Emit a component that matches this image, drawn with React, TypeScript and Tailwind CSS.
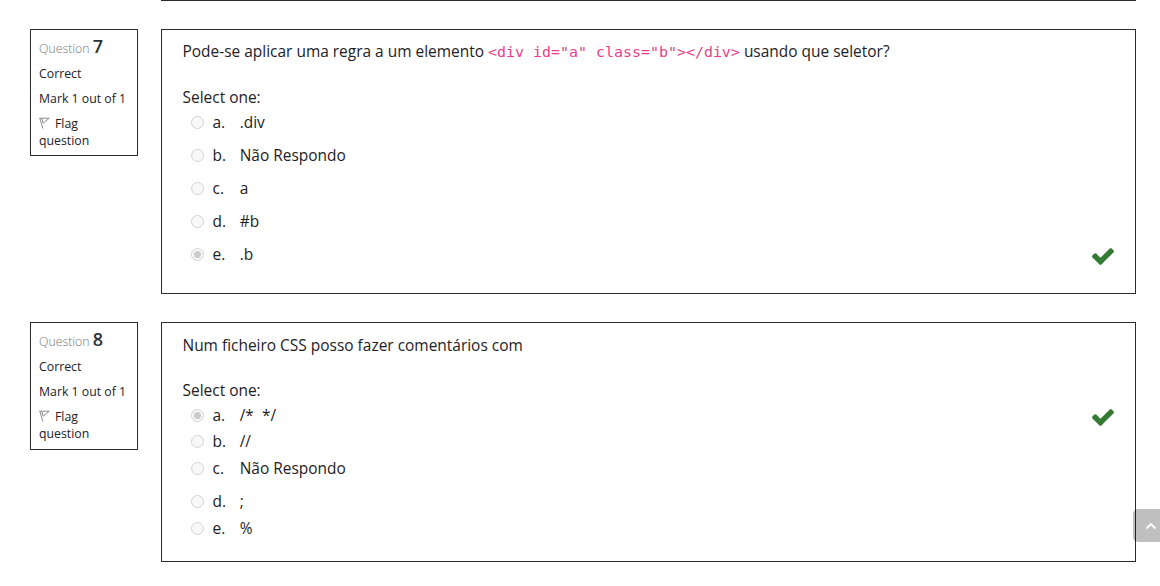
import type { ReactNode } from 'react';

type Option = { letter: string; text: string; height: string; checked?: boolean };

function Check() {
  return (
    <svg width="22" height="17" viewBox="121 334 1550 1188" fill="#357a32">
      <path d="M1671 566q0 40-28 68l-724 724-136 136q-28 28-68 28t-68-28l-136-136-362-362q-28-28-28-68t28-68l136-136q28-28 68-28t68 28l294 295 656-657q28-28 68-28t68 28l136 136q28 28 28 68z" />
    </svg>
  );
}

function Flag() {
  return (
    <svg width="11" height="12" viewBox="0 0 11 12" className="mr-[5px] inline-block align-[-1px]">
      <path d="M0.8 1 3.9 11.5M0.5 1.2H10.2L4.2 6.2M2.8 1.4 4.2 6.2" fill="none" stroke="#8c8c8c" strokeWidth="1" />
    </svg>
  );
}

function Radio({ checked }: { checked?: boolean }) {
  return (
    <span className="flex size-[13px] shrink-0 items-center justify-center rounded-full border border-[#d3d3d3] bg-[#f8f8f8]">
      {checked && <span className="size-[7px] rounded-full bg-[#cbcbcb]" />}
    </span>
  );
}

type Boxes = { info: string; heading: string; body: string; gap: string; list: string };

function Question({ number, prompt, options, boxes }: { number: number; prompt: ReactNode; options: Option[]; boxes: Boxes }) {
  return (
    <section className="flex items-start gap-[23px]">
      <aside className={`w-[108px] shrink-0 border border-[#2b2b2b] px-[8px] text-[12.3px] leading-[17px] ${boxes.info}`}>
        <h3 className={`font-light leading-[24px] text-[#777] ${boxes.heading}`}>
          Question <span className="text-[18px] font-semibold text-[#2d3134]">{number}</span>
        </h3>
        <div className="h-[25px] pt-[5px]">Correct</div>
        <div className="h-[25px] whitespace-nowrap pt-[5px]">Mark 1 out of 1</div>
        <div className="pt-[5px]">
          <Flag />Flag
          <br />
          question
        </div>
      </aside>
      <div className={`w-[975px] shrink-0 border border-[#2b2b2b] pl-[20.5px] text-[15.46px] leading-[23px] ${boxes.body}`}>
        <p className="whitespace-pre">{prompt}</p>
        <p className={boxes.gap}>Select one:</p>
        <div className={boxes.list}>
          {options.map((o) => (
            <div key={o.letter} className={`flex items-start ${o.height}`}>
              <div className="flex h-[23px] grow items-center pl-[8px]">
                <Radio checked={o.checked} />
                <span className="w-[36.2px] pl-[9px]">{o.letter}.</span>
                <span className="whitespace-pre">{o.text}</span>
              </div>
              {o.checked && (
                <div className="flex h-[27px] w-[43px] items-center">
                  <Check />
                </div>
              )}
            </div>
          ))}
        </div>
      </div>
    </section>
  );
}

const first: Option[] = [
  { letter: 'a', text: '.div', height: 'h-[33px]' },
  { letter: 'b', text: 'Não Respondo', height: 'h-[33px]' },
  { letter: 'c', text: 'a', height: 'h-[33px]' },
  { letter: 'd', text: '#b', height: 'h-[33px]' },
  { letter: 'e', text: '.b', height: 'h-[27px]', checked: true },
];

const second: Option[] = [
  { letter: 'a', text: '/*  */', height: 'h-[26px]', checked: true },
  { letter: 'b', text: '//', height: 'h-[27px]' },
  { letter: 'c', text: 'Não Respondo', height: 'h-[33px]' },
  { letter: 'd', text: ';', height: 'h-[27px]' },
  { letter: 'e', text: '%', height: 'h-[27px]' },
];

export default function App() {
  return (
    <main className="relative h-[586px] overflow-hidden bg-white pl-[30px] font-['Open_Sans',sans-serif] text-[#1d2125]">
      <div className="ml-[131px] h-px w-[975px] bg-[#2b2b2b]" />
      <div className="flex flex-col gap-[28px] pt-[28px]">
        <Question
          number={7}
          prompt={
            <>
              Pode-se aplicar uma regra a um elemento{' '}
              <code className="font-['DejaVu_Sans_Mono',monospace] text-[14.95px] text-[#e83e8c]">{'<div id="a" class="b"></div>'}</code>
              {' '}usando que seletor?
            </>
          }
          options={first}
          boxes={{ info: 'h-[127px] pt-[4px]', heading: 'h-[26px]', body: 'h-[265px] pt-[10px]', gap: 'pt-[22px]', list: 'pt-[2px]' }}
        />
        <Question
          number={8}
          prompt="Num ficheiro CSS posso fazer comentários com"
          options={second}
          boxes={{ info: 'h-[128px] pt-[4px]', heading: 'h-[26px]', body: 'h-[240px] pt-[11px]', gap: 'pt-[22px]', list: 'pt-[2px]' }}
        />
      </div>
      <button aria-label="Back to top" className="absolute left-[1133px] top-[509px] flex h-[33px] w-[27px] items-center justify-center rounded-l-[5px] bg-black/25 pl-[8px]">
        <svg width="12" height="8" viewBox="0 0 12 8">
          <path d="M1.5 6.5 6 2 10.5 6.5" fill="none" stroke="white" strokeWidth="1.8" />
        </svg>
      </button>
    </main>
  );
}
